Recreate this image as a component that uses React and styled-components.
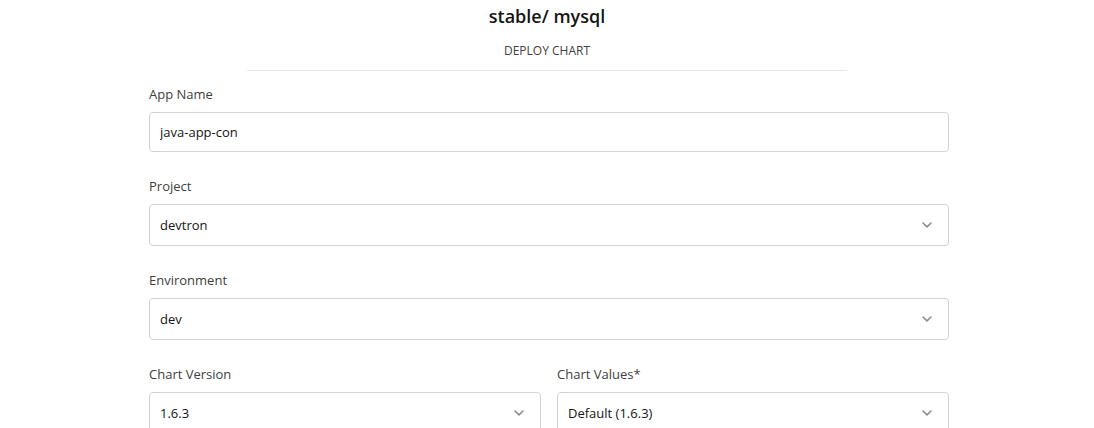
import React from 'react'
import styled, { createGlobalStyle } from 'styled-components'

const Global = createGlobalStyle`
  body {
    margin: 0;
    background: #fff;
    font-family: "Open Sans", "Noto Sans", sans-serif;
    color: #151515;
  }
`

function Chevron() {
  return (
    <svg width="12" height="8" viewBox="0 0 12 8">
      <path d="M2 2 L6 5.8 L10 2" fill="none" stroke="#8c8c8c" strokeWidth="1.6" strokeLinecap="round" strokeLinejoin="round" />
    </svg>
  )
}

function Select({ value }) {
  return (
    <SelectBox>
      <span>{value}</span>
      <Arrow><Chevron /></Arrow>
    </SelectBox>
  )
}

export default function App() {
  return (
    <>
      <Global />
      <Page>
        <Header>
          <Title>stable/ mysql</Title>
          <Sub>DEPLOY CHART</Sub>
        </Header>
        <Form>
          <Field>
            <Label>App Name</Label>
            <Input defaultValue="java-app-con" />
          </Field>
          <Field>
            <Label>Project</Label>
            <Select value="devtron" />
          </Field>
          <Field>
            <Label>Environment</Label>
            <Select value="dev" />
          </Field>
          <Row>
            <Field>
              <Label>Chart Version</Label>
              <Select value="1.6.3" />
            </Field>
            <Field>
              <Label>Chart Values*</Label>
              <Select value="Default (1.6.3)" />
            </Field>
          </Row>
        </Form>
      </Page>
    </>
  )
}

const Page = styled.div`
  display: flex;
  flex-direction: column;
  align-items: center;
  height: 428px;
  overflow: hidden;
`

const Header = styled.div`
  width: 600px;
  display: flex;
  flex-direction: column;
  align-items: center;
  border-bottom: 1px solid #e4e6e9;
  padding-top: 4px;
  padding-bottom: 11px;
`

const Title = styled.h1`
  margin: 0;
  font-size: 18px;
  font-weight: 600;
  line-height: 24px;
  color: #151515;
`

const Sub = styled.div`
  margin-top: 15px;
  font-size: 12px;
  line-height: 16px;
  color: #404040;
`

const Form = styled.div`
  width: 800px;
  margin-left: 4px;
  display: flex;
  flex-direction: column;
  gap: 25px;
  padding-top: 14px;
`

const Field = styled.div`
  display: flex;
  flex-direction: column;
  flex: 1;
  min-width: 0;
`

const Row = styled.div`
  display: flex;
  gap: 16px;
`

const Label = styled.label`
  font-size: 13px;
  line-height: 18px;
  color: #404040;
  margin-bottom: 9px;
`

const Input = styled.input`
  box-sizing: border-box;
  height: 40px;
  width: 100%;
  border: 1px solid #d0d4d9;
  border-radius: 4px;
  padding: 0 10px;
  font-family: inherit;
  font-size: 13px;
  color: #151515;
  outline: none;
`

const SelectBox = styled.div`
  box-sizing: border-box;
  height: 42px;
  border: 1px solid #d0d4d9;
  border-radius: 4px;
  display: flex;
  align-items: center;
  justify-content: space-between;
  padding: 0 10px;
  font-size: 13px;
  color: #151515;
`

const Arrow = styled.span`
  display: flex;
  align-items: center;
  padding-right: 5px;
`
